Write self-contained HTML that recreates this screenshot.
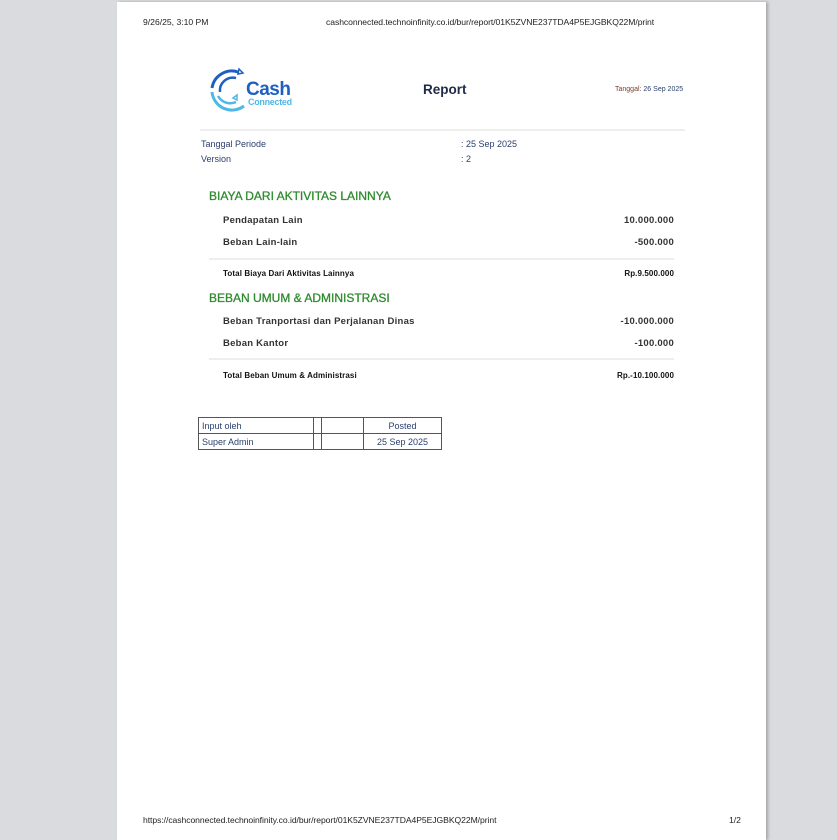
<!DOCTYPE html>
<html><head><meta charset="utf-8"><style>
*{margin:0;padding:0;box-sizing:border-box}
html,body{width:837px;height:840px;overflow:hidden}
body{background:#dadbdf;position:relative;font-family:"Liberation Sans",sans-serif}
.page{position:absolute;left:117px;top:2px;width:649px;height:838px;background:#fff;box-shadow:2px 0 3px rgba(0,0,0,.25)}
.a{position:absolute;white-space:nowrap}
.hd{font-size:8.6px;color:#222}
.blue{color:#2a3f6e}
.g{color:#2e8b2e;font-size:12px;-webkit-text-stroke:.3px #2e8b2e}
.it{letter-spacing:.25px;font-family:"Liberation Sans",sans-serif;font-size:9.5px;font-weight:bold;color:#333}
.tot{font-size:8px;font-weight:bold;color:#111;font-family:"Liberation Sans",sans-serif;letter-spacing:.1px}
.hr{position:absolute;height:2px;background:#eee}
table{position:absolute;left:198px;top:417px;border-collapse:collapse;font-size:9px;color:#2a3f6e}
td{border:1px solid #555;height:16px;padding:0 3px}
</style></head><body>
<div class="page"></div>
<div class="a hd" style="left:143px;top:17px">9/26/25, 3:10 PM</div>
<div class="a hd" style="left:326px;top:17px;letter-spacing:-.06px">cashconnected.technoinfinity.co.id/bur/report/01K5ZVNE237TDA4P5EJGBKQ22M/print</div>
<svg class="a" style="left:208px;top:66px" width="50" height="48" viewBox="0 0 50 48">
<path d="M30 6 A20 20 0 0 0 4 22" fill="none" stroke="#1e5fc0" stroke-width="3"/>
<path d="M4 26 A20 20 0 0 0 36 40" fill="none" stroke="#4fb8e6" stroke-width="3"/>
<path d="M28 12 A13 13 0 0 0 12 26" fill="none" stroke="#1e5fc0" stroke-width="2.5"/>
<path d="M10 30 A14 14 0 0 0 28 36" fill="none" stroke="#4fb8e6" stroke-width="2.5"/>
<path d="M31 3 l4 4 -5 1z" fill="none" stroke="#1e5fc0" stroke-width="1.5"/>
<path d="M29 29 l-4 3 4 2z" fill="none" stroke="#4fb8e6" stroke-width="1.5"/>
</svg>
<div class="a" style="left:246px;top:79px;font-size:19px;font-weight:bold;color:#1e5fc0;letter-spacing:-.5px">Cash</div>
<div class="a" style="left:248px;top:97px;font-size:9px;font-weight:bold;color:#4fb8e6;letter-spacing:-.3px">Connected</div>
<div class="a" style="left:423px;top:82px;font-size:13.5px;color:#1f2a48;font-weight:bold">Report</div>
<div class="a" style="left:615px;top:86px;font-size:7px;color:#2a3f6e"><span style="color:#7a3b2a">Tanggal:</span> 26 Sep 2025</div>
<div class="hr" style="left:200px;top:129px;width:485px"></div>
<div class="a blue" style="left:201px;top:139px;font-size:9px">Tanggal Periode</div>
<div class="a blue" style="left:461px;top:139px;font-size:9px">: 25 Sep 2025</div>
<div class="a blue" style="left:201px;top:154px;font-size:9px">Version</div>
<div class="a blue" style="left:461px;top:154px;font-size:9px">: 2</div>
<div class="a g" style="left:209px;top:189px">BIAYA DARI AKTIVITAS LAINNYA</div>
<div class="a it" style="left:223px;top:215px">Pendapatan Lain</div>
<div class="a it" style="right:163px;top:215px">10.000.000</div>
<div class="a it" style="left:223px;top:237px">Beban Lain-lain</div>
<div class="a it" style="right:163px;top:237px">-500.000</div>
<div class="hr" style="left:209px;top:258px;width:465px"></div>
<div class="a tot" style="left:223px;top:269px">Total Biaya Dari Aktivitas Lainnya</div>
<div class="a tot" style="right:163px;top:269px">Rp.9.500.000</div>
<div class="a g" style="left:209px;top:291px">BEBAN UMUM &amp; ADMINISTRASI</div>
<div class="a it" style="left:223px;top:316px">Beban Tranportasi dan Perjalanan Dinas</div>
<div class="a it" style="right:163px;top:316px">-10.000.000</div>
<div class="a it" style="left:223px;top:338px">Beban Kantor</div>
<div class="a it" style="right:163px;top:338px">-100.000</div>
<div class="hr" style="left:209px;top:358px;width:465px"></div>
<div class="a tot" style="left:223px;top:371px">Total Beban Umum &amp; Administrasi</div>
<div class="a tot" style="right:163px;top:371px">Rp.-10.100.000</div>
<table>
<tr><td style="width:115px">Input oleh</td><td style="width:8px"></td><td style="width:42px"></td><td style="width:78px;text-align:center">Posted</td></tr>
<tr><td>Super Admin</td><td></td><td></td><td style="text-align:center">25 Sep 2025</td></tr>
</table>
<div class="a hd" style="left:143px;top:815px;letter-spacing:-.06px">https://cashconnected.technoinfinity.co.id/bur/report/01K5ZVNE237TDA4P5EJGBKQ22M/print</div>
<div class="a hd" style="left:729px;top:815px">1/2</div>
</body></html>
